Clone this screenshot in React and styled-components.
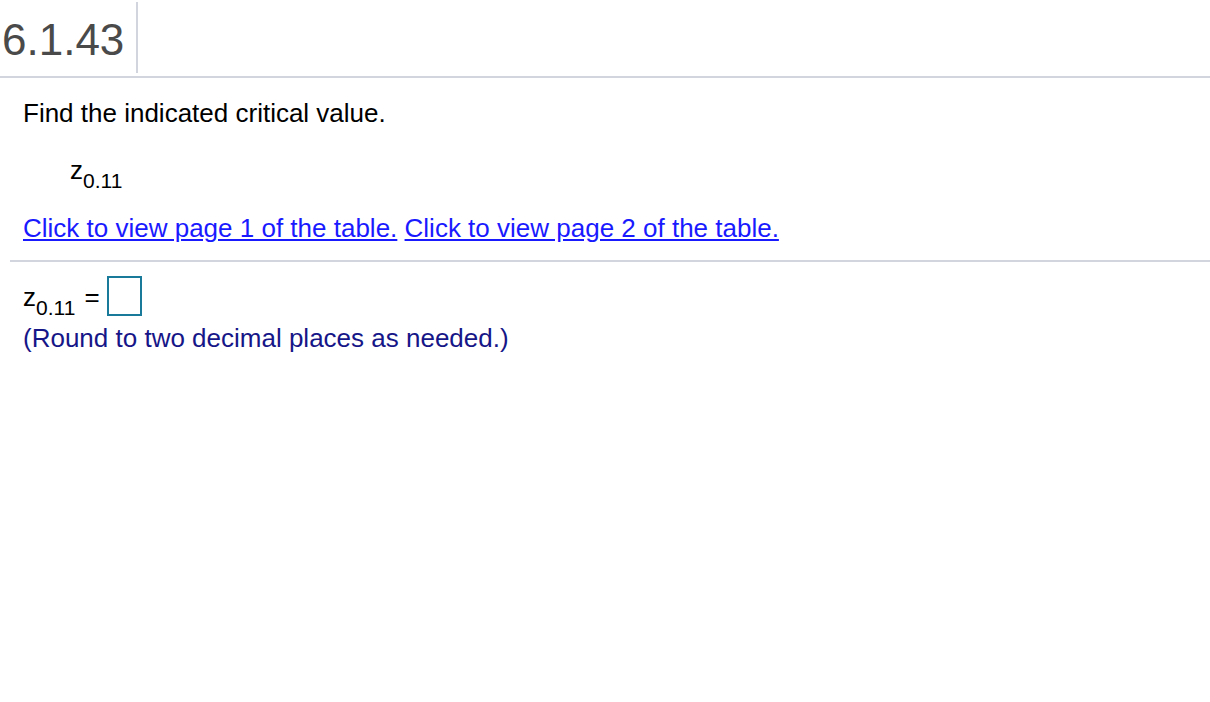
import React from "react";
import styled, { createGlobalStyle } from "styled-components";

const GlobalStyle = createGlobalStyle`
  html, body {
    margin: 0;
    padding: 0;
    background: #fff;
  }
  body {
    font-family: "Liberation Sans", Arial, sans-serif;
  }
`;

const Page = styled.div`
  width: 1210px;
  height: 702px;
  background: #fff;
`;

const Header = styled.div`
  display: flex;
  align-items: flex-start;
  height: 76px;
  border-bottom: 2px solid #d3d5de;
`;

const Number = styled.div`
  height: 58px;
  margin-top: 2px;
  padding: 13px 12px 0 2px;
  font-size: 44px;
  line-height: 50px;
  color: #4a4a4a;
  border-right: 2px solid #d3d5de;
`;

const Body = styled.div`
  padding-left: 23px;
  font-size: 26px;
  line-height: 30px;
`;

const Prompt = styled.p`
  margin: 20px 0 0;
  color: #000;
`;

const Expression = styled.div`
  margin: 27px 0 0 47px;
  color: #000;
`;

const Sub = styled.span`
  position: relative;
  top: 9px;
  font-size: 21px;
  line-height: 0;
  padding-right: ${(p) => (p.$gap ? "2px" : "0")};
`;

const Links = styled.div`
  margin-top: 28px;
`;

const Link = styled.a`
  color: #1a1aff;
  text-decoration: underline;
  text-underline-offset: 2px;
  cursor: pointer;
`;

const Divider = styled.hr`
  margin: 17px 0 0 10px;
  border: none;
  border-top: 2px solid #d3d5de;
`;

const Answer = styled.div`
  padding: 14px 0 0 23px;
  font-size: 26px;
  line-height: 30px;
`;

const AnswerRow = styled.div`
  color: #000;
`;

const Box = styled.span`
  display: inline-block;
  box-sizing: border-box;
  width: 35px;
  height: 40px;
  vertical-align: -10px;
  border: 2px solid #1a7a99;
`;

const Hint = styled.div`
  margin-top: 7px;
  color: #161688;
`;

export default function App() {
  return (
    <Page>
      <GlobalStyle />
      <Header>
        <Number>6.1.43</Number>
      </Header>
      <Body>
        <Prompt>Find the indicated critical value.</Prompt>
        <Expression>
          z<Sub>0.11</Sub>
        </Expression>
        <Links>
          <Link>Click to view page 1 of the table.</Link>{" "}
          <Link>Click to view page 2 of the table.</Link>
        </Links>
      </Body>
      <Divider />
      <Answer>
        <AnswerRow>
          z<Sub $gap>0.11</Sub> = <Box />
        </AnswerRow>
        <Hint>(Round to two decimal places as needed.)</Hint>
      </Answer>
    </Page>
  );
}
